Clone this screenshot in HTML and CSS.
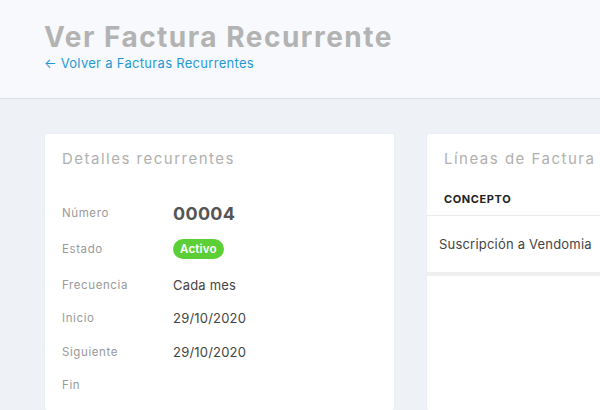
FILE: index.html
```html
<!DOCTYPE html>
<html lang="es">
<head>
<meta charset="utf-8">
<title>Ver Factura Recurrente</title>
<link rel="stylesheet" href="styles.css">
</head>
<body>
<header class="page-header">
  <h1 class="page-title">Ver Factura Recurrente</h1>
  <a class="back-link" href="#">← Volver a Facturas Recurrentes</a>
</header>
<main class="content">
  <section class="card details">
    <h2 class="card-title">Detalles recurrentes</h2>
    <dl class="detail-list">
      <div class="detail-row"><dt>Número</dt><dd class="number">00004</dd></div>
      <div class="detail-row"><dt>Estado</dt><dd><span class="badge">Activo</span></dd></div>
      <div class="detail-row"><dt>Frecuencia</dt><dd>Cada mes</dd></div>
      <div class="detail-row"><dt>Inicio</dt><dd>29/10/2020</dd></div>
      <div class="detail-row"><dt>Siguiente</dt><dd>29/10/2020</dd></div>
      <div class="detail-row"><dt>Fin</dt><dd></dd></div>
    </dl>
  </section>
  <section class="card lines">
    <h2 class="card-title">Líneas de Factura</h2>
    <div class="table-head">CONCEPTO</div>
    <div class="table-row">Suscripción a Vendomia</div>
    <div class="table-sep"></div>
  </section>
</main>
</body>
</html>
```
FILE: styles.css
```css
* { box-sizing: border-box; }
html, body { margin: 0; padding: 0; }
body {
  background: #eef1f6;
  font-family: Inter, "DejaVu Sans", sans-serif;
  width: 600px;
  height: 410px;
  overflow: hidden;
}
.page-header {
  background: #f8f9fc;
  border-bottom: 1px solid #dcdfe3;
  height: 99px;
  padding: 20px 0 0 44px;
}
.page-title {
  margin: 0;
  font-size: 28px;
  line-height: 34px;
  font-weight: 700;
  color: #b3b3b3;
  letter-spacing: 1.5px;
}
.back-link {
  display: block;
  margin-top: 1px;
  font-size: 13px;
  line-height: 16px;
  color: #1f9ad6;
  text-decoration: none;
  letter-spacing: 0.3px;
}
.content {
  display: grid;
  grid-template-columns: 349px 200px;
  column-gap: 33px;
  padding: 35px 0 0 45px;
}
.card {
  background: #fff;
  box-shadow: 0 0 1px rgba(0,0,0,0.12);
  border-radius: 2px;
  height: 276px;
}
.card-title {
  margin: 0;
  padding: 16px 17px 0;
  font-size: 15px;
  line-height: 18px;
  font-weight: 400;
  color: #b0b0b0;
  letter-spacing: 1.5px;
}
.detail-list {
  margin: 28px 0 0;
  padding: 0 17px;
}
.detail-row {
  display: flex;
  align-items: center;
  height: 33.5px;
}
.detail-row:nth-child(1) { height: 34px; }
.detail-row:nth-child(2) { height: 38px; }
.detail-row dt {
  width: 111px;
  font-size: 11.5px;
  color: #9a9a9a;
  letter-spacing: 0.6px;
}
.detail-row dd {
  margin: 0;
  font-size: 13px;
  color: #444;
  letter-spacing: 0.2px;
}
.detail-row dd.number {
  font-size: 18px;
  font-weight: 700;
  color: #555;
  letter-spacing: 0.3px;
}
.badge {
  display: inline-block;
  background: #5ccf37;
  color: #fff;
  font-size: 11.5px;
  font-weight: 600;
  line-height: 20px;
  padding: 0 7px;
  border-radius: 10px;
  letter-spacing: 0.2px;
}
.table-head {
  margin-top: 24px;
  padding: 0 17px 9px;
  font-size: 11px;
  font-weight: 700;
  color: #222;
  letter-spacing: 0.6px;
  border-bottom: 1px solid #ebebeb;
}
.table-row {
  padding: 0 12px;
  height: 56px;
  display: flex;
  align-items: center;
  font-size: 13px;
  color: #444;
  letter-spacing: 0.2px;
  white-space: nowrap;
}
.table-sep {
  height: 4px;
  background: #efefef;
}
```
